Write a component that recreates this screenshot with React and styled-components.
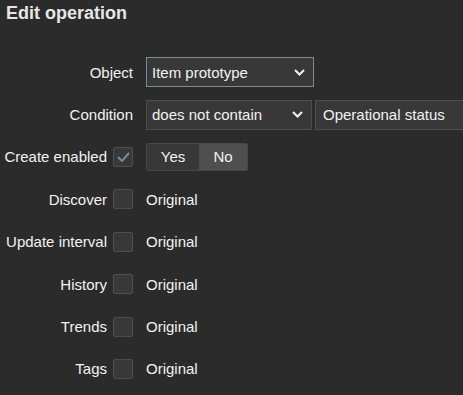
import { Fragment } from "react";
import styled, { createGlobalStyle } from "styled-components";

const GlobalStyle = createGlobalStyle`
  html, body {
    margin: 0;
    background: #2b2b2b;
    overflow: hidden;
  }
  body {
    font-family: "Liberation Sans", Arial, sans-serif;
    color: #f2f2f2;
  }
`;

const Page = styled.div`
  width: 463px;
  height: 395px;
  overflow: hidden;
`;

const Title = styled.h2`
  margin: 0;
  padding: 3px 0 0 6px;
  height: 48px;
  box-sizing: border-box;
  font-size: 18px;
  font-weight: bold;
  color: #e6e6e6;
`;

const Form = styled.div`
  display: grid;
  grid-template-columns: 133px 1fr;
  grid-auto-rows: 42.4px;
  column-gap: 13px;
  align-items: center;
  margin-top: 3px;
`;

const Label = styled.div`
  display: flex;
  justify-content: flex-end;
  align-items: center;
  gap: 6px;
  font-size: 15px;
  white-space: nowrap;
  color: #f2f2f2;
`;

const Controls = styled.div`
  display: flex;
  align-items: center;
  gap: 3px;
  white-space: nowrap;
`;

const Select = styled.div`
  box-sizing: border-box;
  width: ${(p) => p.$width}px;
  height: 30px;
  display: flex;
  align-items: center;
  justify-content: space-between;
  padding: 0 8px 0 5px;
  background: #383838;
  border: 1px solid ${(p) => (p.$focus ? "#768d99" : "#4f4f4f")};
  font-size: 15px;
  color: #f2f2f2;
  flex-shrink: 0;
`;

const TextInput = styled.div`
  box-sizing: border-box;
  width: 200px;
  height: 30px;
  display: flex;
  align-items: center;
  padding: 0 7px;
  background: #383838;
  border: 1px solid #4f4f4f;
  font-size: 15px;
  color: #f2f2f2;
  flex-shrink: 0;
`;

const Check = styled.span`
  box-sizing: border-box;
  width: 20px;
  height: 20px;
  display: inline-flex;
  align-items: center;
  justify-content: center;
  background: #383838;
  border: 1px solid #4f4f4f;
  border-radius: 2px;
`;

const Segmented = styled.div`
  display: flex;
  box-sizing: border-box;
  height: 28px;
  border: 1px solid #474747;
  border-radius: 2px;
  overflow: hidden;
`;

const Segment = styled.span`
  width: ${(p) => p.$width}px;
  display: flex;
  align-items: center;
  justify-content: center;
  font-size: 15px;
  background: ${(p) => (p.$active ? "#4f4f4f" : "#383838")};
  color: #f2f2f2;
`;

const Value = styled.span`
  font-size: 15px;
  color: #f2f2f2;
`;

const Chevron = () => (
  <svg width="11" height="7" viewBox="0 0 11 7">
    <path d="M1 1l4.5 4.5L10 1" fill="none" stroke="#f2f2f2" strokeWidth="2" />
  </svg>
);

const Tick = () => (
  <svg width="13" height="10" viewBox="0 0 13 10">
    <path d="M1 5l4 4 7-8" fill="none" stroke="#768d99" strokeWidth="2" />
  </svg>
);

const overrides = ["Discover", "Update interval", "History", "Trends", "Tags"];

const App = () => (
  <Page>
    <GlobalStyle />
    <Title>Edit operation</Title>
    <Form>
      <Label>Object</Label>
      <Controls>
        <Select $width={168} $focus>
          Item prototype
          <Chevron />
        </Select>
      </Controls>

      <Label>Condition</Label>
      <Controls>
        <Select $width={166}>
          does not contain
          <Chevron />
        </Select>
        <TextInput>Operational status</TextInput>
      </Controls>

      <Label>
        Create enabled
        <Check>
          <Tick />
        </Check>
      </Label>
      <Controls>
        <Segmented>
          <Segment $width={52}>Yes</Segment>
          <Segment $width={48} $active>
            No
          </Segment>
        </Segmented>
      </Controls>

      {overrides.map((name) => (
        <Fragment key={name}>
          <Label>
            {name}
            <Check />
          </Label>
          <Controls>
            <Value>Original</Value>
          </Controls>
        </Fragment>
      ))}
    </Form>
  </Page>
);

export default App;
